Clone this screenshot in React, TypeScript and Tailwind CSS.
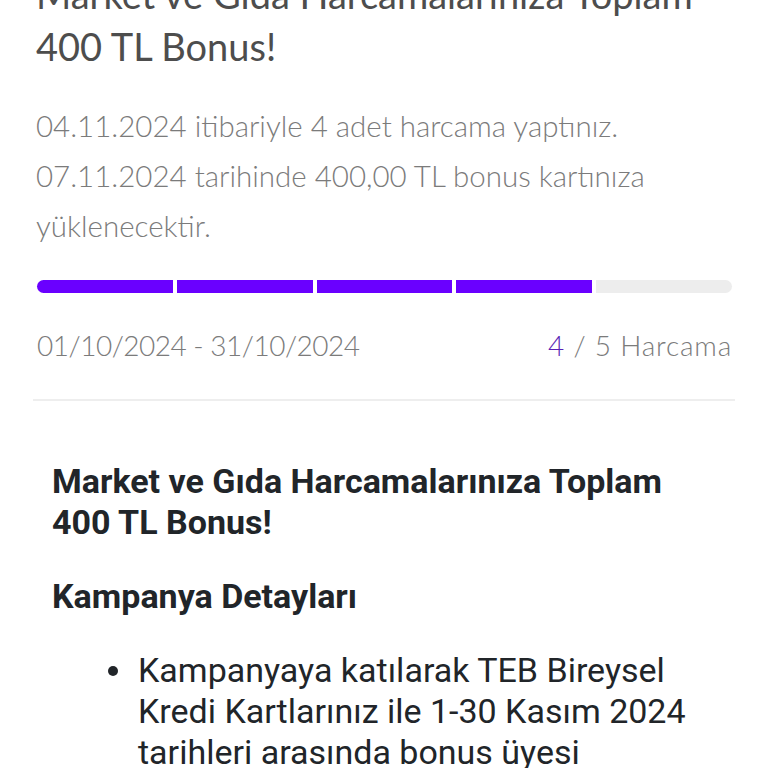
import React from "react";

export default function App() {
  const segs = [true, true, true, true, false];
  return (
    <div className="w-[768px] h-[768px] overflow-hidden bg-white">
      <div className="px-[36px] font-['Lato',sans-serif]">
        <h1 className="mt-[-32px] text-[38px] leading-[52px] text-[#4d4d4d] font-normal">
          Market ve Gıda Harcamalarınıza Toplam 400 TL Bonus!
        </h1>
        <p className="mt-[29px] text-[29.5px] leading-[50px] text-[#7b7b7b] font-light">
          04.11.2024 itibariyle 4 adet harcama yaptınız. 07.11.2024 tarihinde 400,00 TL bonus kartınıza yüklenecektir.
        </p>
        <div className="mt-[29px] flex gap-[4px] pl-[1px] pr-0">
          {segs.map((on, i) => (
            <div
              key={i}
              className={
                "h-[13px] flex-1 " +
                (on ? "bg-[#6a00ff] " : "bg-[#ededed] ") +
                (i === 0 ? "rounded-l-full " : "") +
                (i === 4 ? "rounded-r-full" : "")
              }
            />
          ))}
        </div>
        <div className="mt-[32px] pl-[1px] flex justify-between items-baseline text-[28px] leading-[40px] text-[#7b7b7b] font-light">
          <span className="tracking-[-0.5px]">01/10/2024 - 31/10/2024</span>
          <span className="tracking-[0.8px]">
            <span className="text-[#5a1fb5]">4</span> / 5 Harcama
          </span>
        </div>
      </div>
      <div className="mx-[33px] mt-[34px] h-[2px] bg-[#eeeeee]" />
      <div className="px-[52px] font-['Roboto',sans-serif] text-[#212529]">
        <h2 className="mt-[60px] text-[34px] leading-[41px] font-bold">
          Market ve Gıda Harcamalarınıza Toplam 400 TL Bonus!
        </h2>
        <h3 className="mt-[33px] text-[34px] leading-[41px] font-bold">Kampanya Detayları</h3>
        <ul className="mt-[33px] text-[34px] leading-[41px] font-normal">
          <li className="flex">
            <span className="w-[86px] shrink-0 flex justify-end pr-[20px] pt-[16px]">
              <span className="block w-[10px] h-[10px] rounded-full bg-[#212529]" />
            </span>
            <span>
              Kampanyaya katılarak TEB Bireysel Kredi Kartlarınız ile 1-30 Kasım 2024 tarihleri arasında bonus üyesi işyerlerinde yapacağınız harcamalara bonus kazanın.
            </span>
          </li>
        </ul>
      </div>
    </div>
  );
}
